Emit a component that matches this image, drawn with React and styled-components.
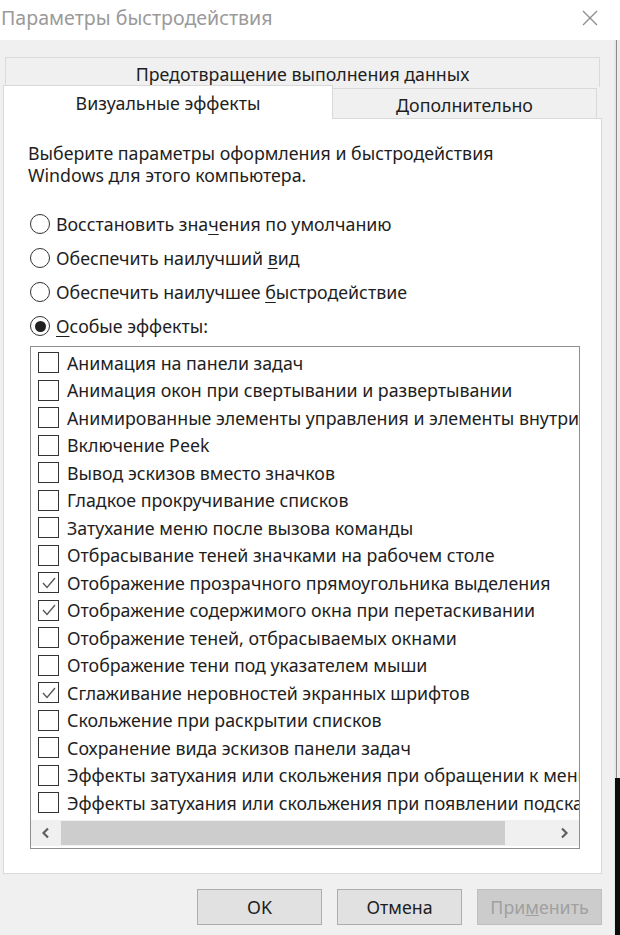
import React from 'react';
import styled, { createGlobalStyle } from 'styled-components';

const GlobalStyle = createGlobalStyle`
  html, body {
    margin: 0;
    padding: 0;
    background: #f0f0f0;
  }
  body {
    font-family: "Noto Sans", "Open Sans", sans-serif;
    color: #1e1e1e;
  }
`;

const effects = [
  { label: 'Анимация на панели задач', checked: false },
  { label: 'Анимация окон при свертывании и развертывании', checked: false },
  { label: 'Анимированные элементы управления и элементы внутри окна', checked: false },
  { label: 'Включение Peek', checked: false },
  { label: 'Вывод эскизов вместо значков', checked: false },
  { label: 'Гладкое прокручивание списков', checked: false },
  { label: 'Затухание меню после вызова команды', checked: false },
  { label: 'Отбрасывание теней значками на рабочем столе', checked: false },
  { label: 'Отображение прозрачного прямоугольника выделения', checked: true },
  { label: 'Отображение содержимого окна при перетаскивании', checked: true },
  { label: 'Отображение теней, отбрасываемых окнами', checked: false },
  { label: 'Отображение тени под указателем мыши', checked: false },
  { label: 'Сглаживание неровностей экранных шрифтов', checked: true },
  { label: 'Скольжение при раскрытии списков', checked: false },
  { label: 'Сохранение вида эскизов панели задач', checked: false },
  { label: 'Эффекты затухания или скольжения при обращении к меню', checked: false },
  { label: 'Эффекты затухания или скольжения при появлении подсказок', checked: false }
];

const App = () => {
  return (
    <>
      <GlobalStyle />
      <Screen>
        <Dialog>
          <TitleBar>
            <Title>Параметры быстродействия</Title>
            <CloseIcon viewBox="0 0 16 16">
              <path d="M1 1 L15 15 M15 1 L1 15" stroke="#8c8c8c" strokeWidth="1.3" fill="none" />
            </CloseIcon>
          </TitleBar>
          <Body>
            <TabRowTop>
              <BackTab>Предотвращение выполнения данных</BackTab>
            </TabRowTop>
            <TabRow>
              <ActiveTab>Визуальные эффекты</ActiveTab>
              <SideTab>Дополнительно</SideTab>
            </TabRow>
            <Panel>
              <Intro>
                Выберите параметры оформления и быстродействия
                <br />
                Windows для этого компьютера.
              </Intro>
              <RadioGroup>
                <RadioRow>
                  <Radio />
                  <span>
                    Восстановить зна<u>ч</u>ения по умолчанию
                  </span>
                </RadioRow>
                <RadioRow>
                  <Radio />
                  <span>
                    Обеспечить наилучший <u>в</u>ид
                  </span>
                </RadioRow>
                <RadioRow>
                  <Radio />
                  <span>
                    Обеспечить наилучшее <u>б</u>ыстродействие
                  </span>
                </RadioRow>
                <RadioRow>
                  <Radio $selected />
                  <span>
                    <u>О</u>собые эффекты:
                  </span>
                </RadioRow>
              </RadioGroup>
              <ListBox>
                <ListItems>
                  {effects.map((item) => (
                    <ListRow key={item.label}>
                      <CheckBox>
                        {item.checked && (
                          <svg width="18" height="18" viewBox="0 0 18 18">
                            <polyline points="3,9 7,13.5 15,4" fill="none" stroke="#555" strokeWidth="1.3" />
                          </svg>
                        )}
                      </CheckBox>
                      <ItemLabel>{item.label}</ItemLabel>
                    </ListRow>
                  ))}
                </ListItems>
                <HScroll>
                  <ScrollArrow>
                    <svg width="10" height="12" viewBox="0 0 10 12">
                      <polyline points="7,1.5 2.5,6 7,10.5" fill="none" stroke="#606060" strokeWidth="2.2" />
                    </svg>
                  </ScrollArrow>
                  <ScrollTrack>
                    <ScrollThumb style={{ width: '91%' }} />
                  </ScrollTrack>
                  <ScrollArrow>
                    <svg width="10" height="12" viewBox="0 0 10 12">
                      <polyline points="3,1.5 7.5,6 3,10.5" fill="none" stroke="#606060" strokeWidth="2.2" />
                    </svg>
                  </ScrollArrow>
                </HScroll>
              </ListBox>
            </Panel>
            <ButtonBar>
              <DialogButton>OK</DialogButton>
              <DialogButton>Отмена</DialogButton>
              <DialogButton disabled>
                При<u>м</u>енить
              </DialogButton>
            </ButtonBar>
          </Body>
        </Dialog>
        <EdgeStrip />
      </Screen>
    </>
  );
};

export default App;

const Screen = styled.div`
  display: flex;
  width: 620px;
  height: 935px;
  overflow: hidden;
`;

const Dialog = styled.div`
  width: 614px;
  min-width: 0;
  flex: 0 0 614px;
  display: flex;
  flex-direction: column;
  background: #f0f0f0;
`;

const EdgeStrip = styled.div`
  flex: 0 0 6px;
  position: relative;
  background:
    linear-gradient(to bottom, #ffffff 0, #ffffff 40px, transparent 40px),
    linear-gradient(to right, #e6e6e6 0, #e6e6e6 2px, #8a8a8a 2px, #8a8a8a 3px, #ececec 3px);
  &::after {
    content: '';
    position: absolute;
    left: 1px;
    right: 0;
    top: 778px;
    bottom: 0;
    background: #0c0c0c;
  }
`;

const TitleBar = styled.div`
  height: 40px;
  background: #ffffff;
  display: flex;
  align-items: center;
  justify-content: space-between;
  padding: 0 16px 5px 1px;
  box-sizing: border-box;
`;

const Title = styled.div`
  font-size: 19.6px;
  color: #9a9a9a;
`;

const CloseIcon = styled.svg`
  width: 16px;
  height: 16px;
`;

const Body = styled.div`
  flex: 1;
  min-width: 0;
  display: flex;
  flex-direction: column;
  padding: 17px 12px 0 3px;
`;

const TabRowTop = styled.div`
  display: flex;
  padding: 0 2px 0 2px;
`;

const BackTab = styled.div`
  flex: 1;
  height: 30px;
  box-sizing: border-box;
  border: 1px solid #dadada;
  border-bottom: none;
  background: #f0f0f0;
  display: flex;
  align-items: center;
  justify-content: center;
  font-size: 17.8px;
  padding-top: 2px;
`;

const TabRow = styled.div`
  display: flex;
  align-items: flex-end;
  margin-top: -2px;
  position: relative;
  z-index: 1;
  margin-bottom: -1px;
`;

const ActiveTab = styled.div`
  width: 330px;
  height: 34px;
  box-sizing: border-box;
  background: #ffffff;
  border: 1px solid #d9d9d9;
  border-bottom: none;
  display: flex;
  align-items: center;
  justify-content: center;
  font-size: 17.8px;
`;

const SideTab = styled.div`
  width: 264px;
  height: 31px;
  box-sizing: border-box;
  background: #f0f0f0;
  border: 1px solid #d9d9d9;
  border-left: none;
  display: flex;
  align-items: center;
  justify-content: center;
  font-size: 17.8px;
  padding-top: 2px;
`;

const Panel = styled.div`
  height: 756px;
  min-width: 0;
  box-sizing: border-box;
  background: #ffffff;
  border: 1px solid #d9d9d9;
  padding: 23px 21px 24px 26px;
  display: flex;
  flex-direction: column;
`;

const Intro = styled.div`
  font-size: 17.8px;
  line-height: 22px;
  margin-left: -2px;
`;

const RadioGroup = styled.div`
  display: flex;
  flex-direction: column;
  margin-top: 21px;
`;

const RadioRow = styled.label`
  display: flex;
  align-items: center;
  gap: 6px;
  height: 34px;
  font-size: 17.8px;
  & u {
    text-decoration-thickness: 1px;
    text-underline-offset: 3px;
  }
`;

const Radio = styled.span`
  width: 20px;
  height: 20px;
  box-sizing: border-box;
  border: 1px solid #333333;
  border-radius: 50%;
  display: flex;
  align-items: center;
  justify-content: center;
  &::after {
    content: '';
    width: 11px;
    height: 11px;
    border-radius: 50%;
    background: #202020;
    display: ${(p) => (p.$selected ? 'block' : 'none')};
  }
`;

const ListBox = styled.div`
  margin-top: 3px;
  flex: 1;
  min-width: 0;
  display: flex;
  flex-direction: column;
  border: 1px solid #8f8f8f;
  background: #ffffff;
  overflow: hidden;
`;

const ListItems = styled.div`
  flex: 1;
  min-width: 0;
  padding-top: 2px;
  overflow: hidden;
`;

const ListRow = styled.div`
  display: flex;
  align-items: center;
  height: 27.5px;
  padding-left: 7px;
  white-space: nowrap;
`;

const CheckBox = styled.span`
  flex: 0 0 auto;
  width: 21px;
  height: 21px;
  box-sizing: border-box;
  border: 1px solid #333333;
  display: flex;
  align-items: center;
  justify-content: center;
`;

const ItemLabel = styled.span`
  margin-left: 8px;
  font-size: 17.8px;
`;

const HScroll = styled.div`
  height: 26px;
  display: flex;
  align-items: stretch;
  background: #f0f0f0;
  margin-bottom: 2px;
`;

const ScrollArrow = styled.div`
  width: 30px;
  display: flex;
  align-items: center;
  justify-content: center;
`;

const ScrollTrack = styled.div`
  flex: 1;
  display: flex;
  padding: 1px 0;
`;

const ScrollThumb = styled.div`
  background: #cdcdcd;
`;

const ButtonBar = styled.div`
  display: flex;
  justify-content: flex-end;
  gap: 15px;
  padding-top: 15px;
`;

const DialogButton = styled.button`
  width: 125px;
  height: 36px;
  box-sizing: border-box;
  font-family: "Noto Sans", "Open Sans", sans-serif;
  font-size: 17.8px;
  color: #1e1e1e;
  background: #e1e1e1;
  border: 1px solid #adadad;
  padding: 0;
  &:disabled {
    background: #cccccc;
    border-color: #bfbfbf;
    color: #a0a0a0;
  }
`;
